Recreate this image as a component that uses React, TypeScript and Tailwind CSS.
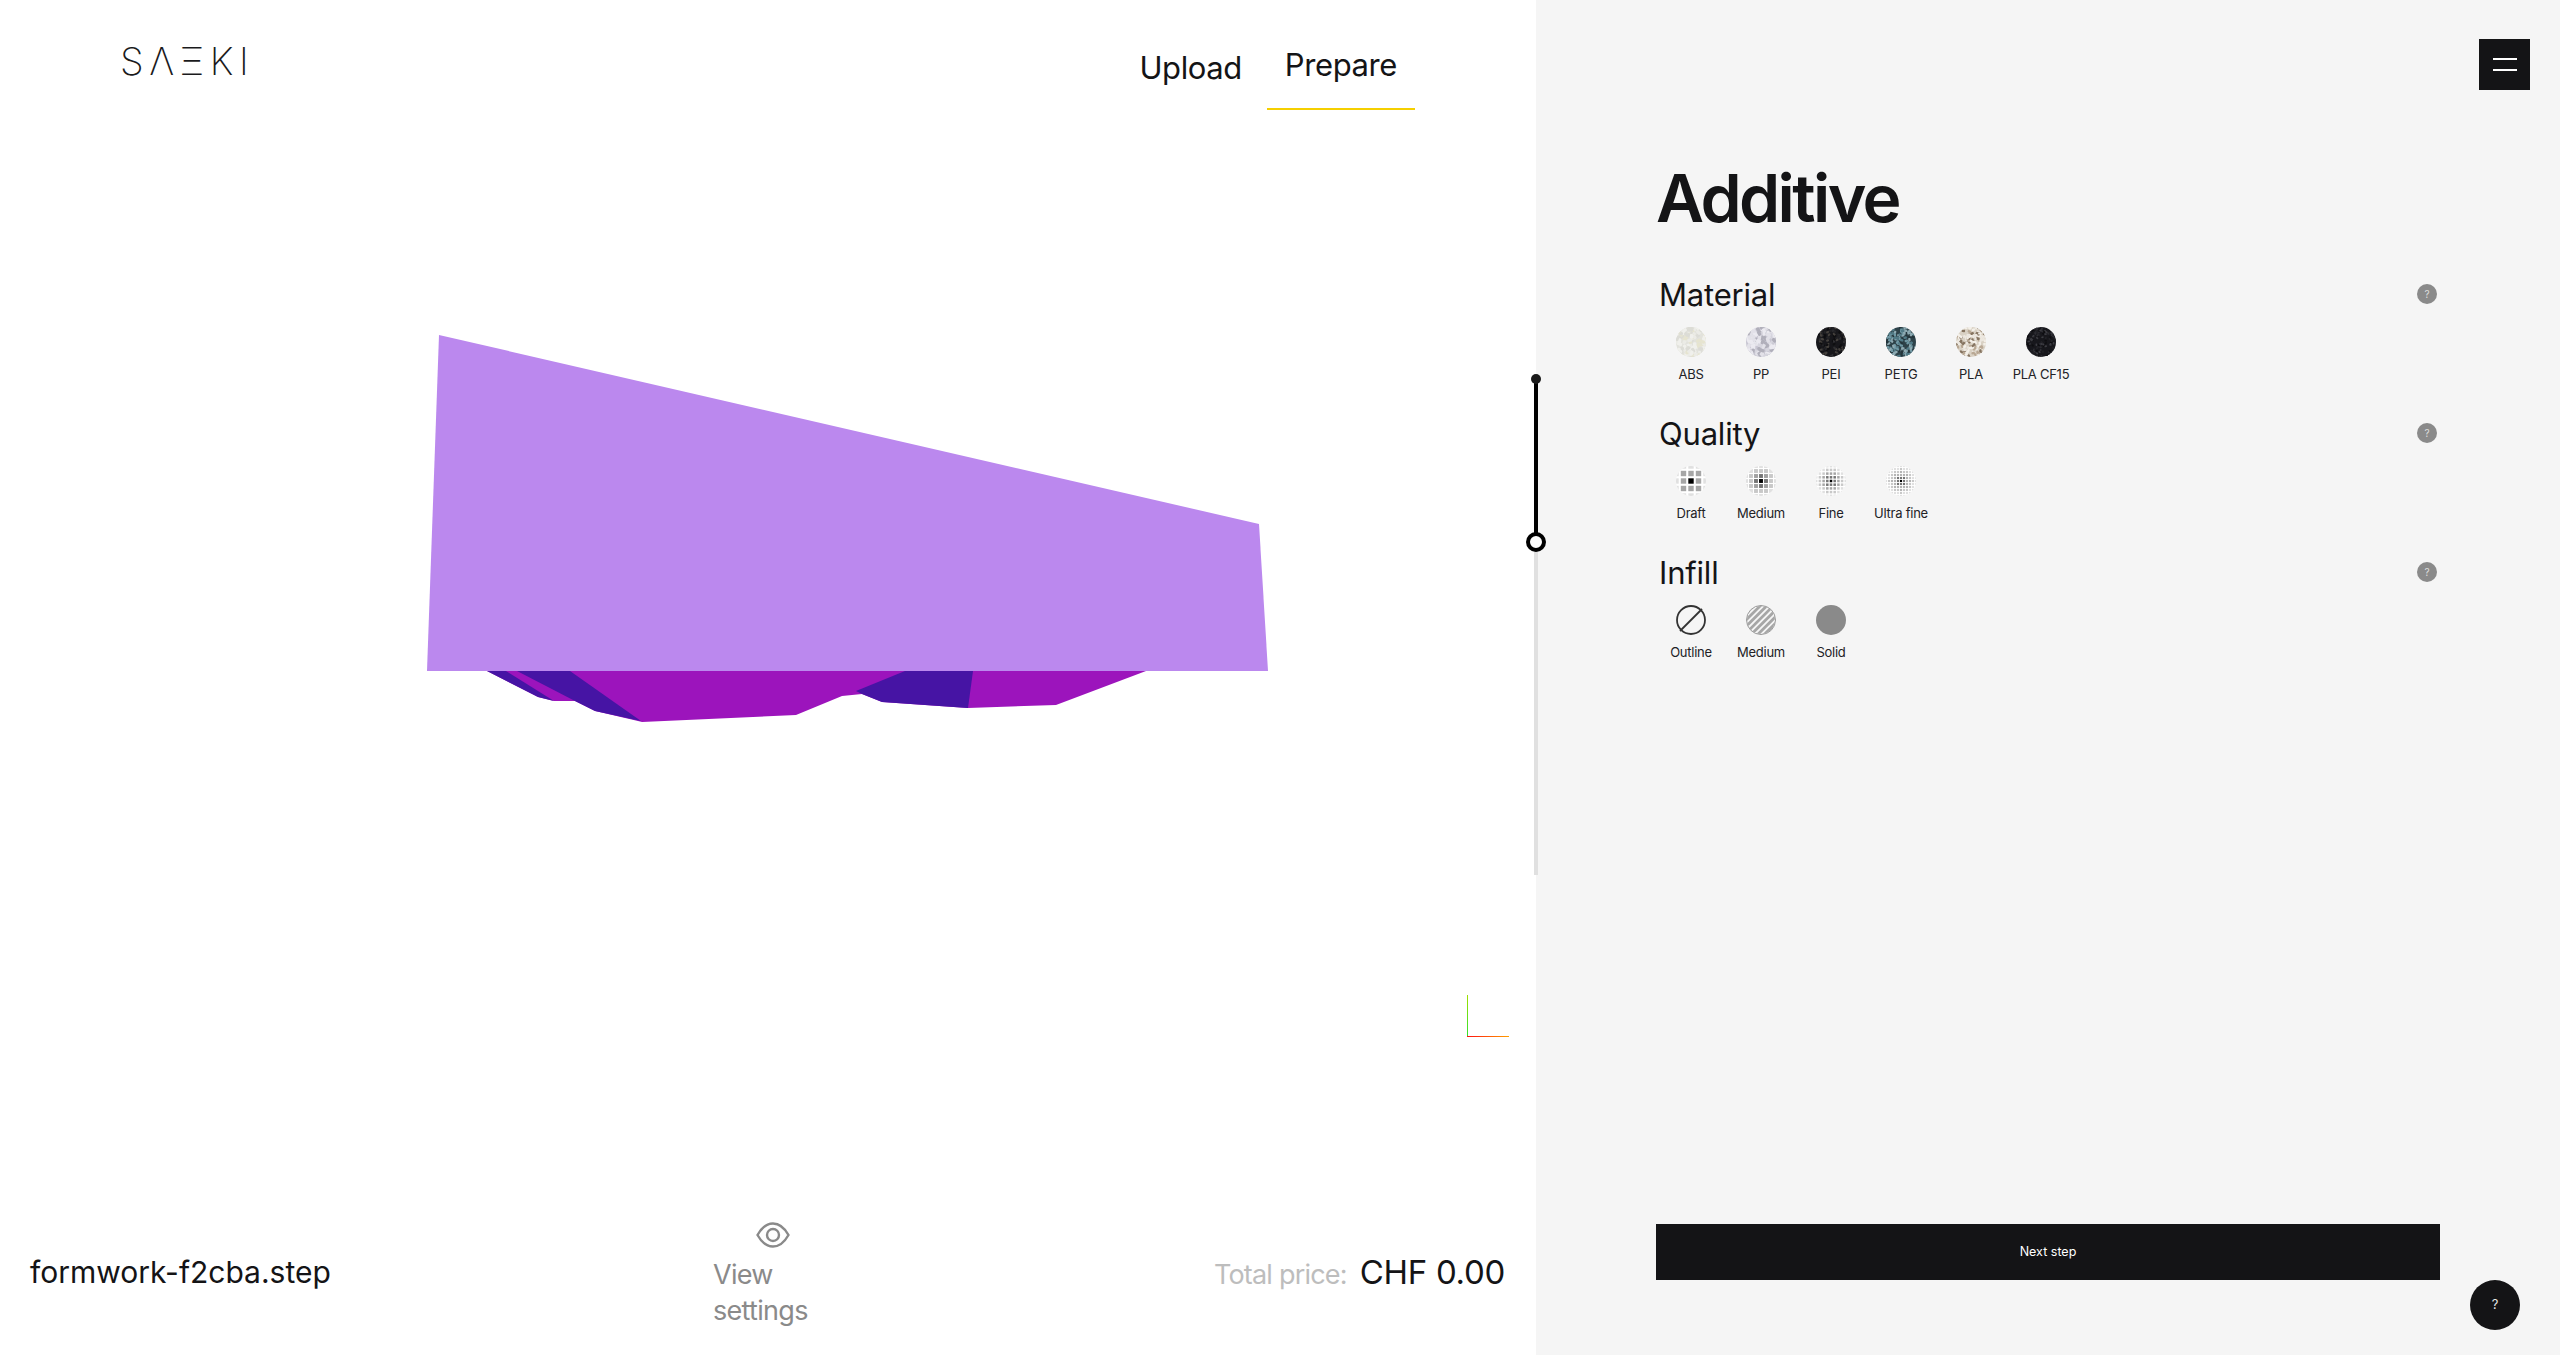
type Pellet = { base: string; colors: string[]; size: number; count: number };

const materials: { label: string; pellet: Pellet }[] = [
  { label: "ABS", pellet: { base: "#e2e2dc", colors: ["#f0f0ec", "#ebebe6", "#e6e4d0", "#dcdcd6"], size: 5, count: 110 } },
  { label: "PP", pellet: { base: "#c8c6d2", colors: ["#e2e1e8", "#ebeaf0", "#b0afba", "#d6d5de"], size: 5, count: 110 } },
  { label: "PEI", pellet: { base: "#17171b", colors: ["#2e2e31", "#45413d", "#222225", "#0e0e10"], size: 3, count: 110 } },
  { label: "PETG", pellet: { base: "#2e4249", colors: ["#6f98a4", "#517a86", "#8fabb3", "#24353b"], size: 3.5, count: 130 } },
  { label: "PLA", pellet: { base: "#d9d1c4", colors: ["#ece7df", "#85735f", "#b9a894", "#f4f0e9"], size: 3.5, count: 140 } },
  { label: "PLA CF15", pellet: { base: "#17171c", colors: ["#2d2d33", "#3c3c42", "#222227", "#0d0d10"], size: 2.5, count: 130 } },
];

const qualities = [
  { label: "Draft", cell: 7.5, dot: 5.4, tone: "#a6a6a6" },
  { label: "Medium", cell: 5, dot: 3.9, tone: "#a0a0a0" },
  { label: "Fine", cell: 3.7, dot: 2.5, tone: "#a4a4a4" },
  { label: "Ultra fine", cell: 3, dot: 2.1, tone: "#b4b4b4" },
];

function PelletSwatch({ pellet, seed }: { pellet: Pellet; seed: number }) {
  let s = seed * 7919 + 13;
  const rnd = () => {
    s = (s * 1103515245 + 12345) % 2147483648;
    return s / 2147483648;
  };
  const bits = Array.from({ length: pellet.count }, () => ({
    x: rnd() * 30,
    y: rnd() * 30,
    r: rnd() * 180,
    c: pellet.colors[Math.floor(rnd() * pellet.colors.length)],
  }));
  return (
    <svg width="30" height="30" viewBox="0 0 30 30" className="rounded-full">
      <rect width="30" height="30" fill={pellet.base} />
      {bits.map((b, i) => (
        <rect
          key={i}
          x={b.x - pellet.size / 2}
          y={b.y - pellet.size / 3}
          width={pellet.size}
          height={(pellet.size * 2) / 3}
          rx={pellet.size / 4}
          fill={b.c}
          transform={`rotate(${b.r} ${b.x} ${b.y})`}
        />
      ))}
    </svg>
  );
}

function QualitySwatch({ cell, dot, tone }: { cell: number; dot: number; tone: string }) {
  const n = Math.ceil(15 / cell);
  const cells = [];
  for (let row = -n; row <= n; row++) {
    for (let col = -n; col <= n; col++) {
      const dist = Math.hypot(row * cell, col * cell);
      const center = row === 0 && col === 0;
      const fade = dist > 12 ? "#e0e0e0" : dist > 9 && cell < 7 ? "#c8c8c8" : tone;
      const inner = cell < 7 && dist < 6 ? "#757575" : fade;
      cells.push(
        <rect
          key={`${row}-${col}`}
          x={15 + col * cell - dot / 2}
          y={15 + row * cell - dot / 2}
          width={dot}
          height={dot}
          fill={center ? "#000000" : inner}
        />
      );
    }
  }
  return (
    <svg width="30" height="30" viewBox="0 0 30 30" className="rounded-full bg-white">
      {cells}
    </svg>
  );
}

function OutlineIcon() {
  return (
    <svg width="30" height="30" viewBox="0 0 30 30">
      <circle cx="15" cy="15" r="14" fill="none" stroke="#333333" strokeWidth="1.8" />
      <line x1="4" y1="26" x2="26" y2="4" stroke="#333333" strokeWidth="1.8" />
    </svg>
  );
}

function StripesIcon() {
  const lines = [-21, -14, -7, 0, 7, 14, 21];
  return (
    <svg width="30" height="30" viewBox="0 0 30 30" className="rounded-full border border-[#999999] bg-[#f5f5f5]">
      {lines.map((o) => (
        <line key={o} x1={o - 6} y1="34" x2={o + 34} y2="-6" stroke="#a6a6a6" strokeWidth="3" />
      ))}
    </svg>
  );
}

function Option({ label, children }: { label: string; children: React.ReactNode }) {
  return (
    <div className="flex w-[70px] flex-col items-center">
      {children}
      <span className="mt-[9px] whitespace-nowrap text-[13px] leading-[16px] tracking-[-0.25px] text-[#222226]">{label}</span>
    </div>
  );
}

function Section({ title, children }: { title: string; children: React.ReactNode }) {
  return (
    <section className="h-[139px]">
      <div className="flex h-[32px] items-center justify-between pl-[3px] pr-[3px]">
        <h2 className="pt-[1px] text-[31px] font-normal leading-[32px] tracking-[-0.2px] text-[#141416]">{title}</h2>
        <span className="flex h-[20px] w-[20px] items-center justify-center rounded-full bg-[#8a8a8a] text-[10px] text-[#dddddd]">?</span>
      </div>
      <div className="mt-[17px] flex">{children}</div>
    </section>
  );
}

export default function App() {
  return (
    <div className="relative flex h-[1355px] w-[2560px] overflow-hidden bg-white font-['Inter',sans-serif] text-[#141416]">
      <div className="flex w-[1536px] flex-col">
        <header className="flex h-[110px] items-start justify-between">
          <div className="ml-[120px] mt-[38px] text-[38px] font-extralight leading-[46px] tracking-[5.5px] text-[#1a1a1c]">SΛΞKI</div>
          <nav className="mr-[121px] flex text-[31px] tracking-[-0.4px]">
            <span className="flex h-[110px] items-center pl-[18px] pr-[25px] pt-[26px]">Upload</span>
            <span className="flex h-[110px] items-center border-b-[2px] border-[#f5cf00] px-[18px] pt-[22px]">Prepare</span>
          </nav>
        </header>

        <svg width="1536" height="1080" viewBox="0 110 1536 1080" className="block">
          <defs>
            <linearGradient id="axisY" x1="0" y1="0" x2="0" y2="1">
              <stop offset="0" stopColor="#a0e000" />
              <stop offset="1" stopColor="#30e030" />
            </linearGradient>
            <linearGradient id="axisX" x1="0" y1="0" x2="1" y2="0">
              <stop offset="0" stopColor="#ff1010" />
              <stop offset="1" stopColor="#ffa000" />
            </linearGradient>
          </defs>
          <polygon
            fill="#9c14bc"
            points="487,671 538,697 554,701 575,701 595,711 638,721 642,722 796,715 842,696 862,694 882,702 968,708 1056,705 1146,671"
          />
          <polygon fill="#4614a4" points="487,671 506,671 554,701 538,697" />
          <polygon fill="#4614a4" points="517,671 570,671 641,721 595,711 575,701" />
          <polygon fill="#4614a4" points="905,671 973,671 968,708 882,702 862,694 856,691" />
          <polygon fill="#bb88ee" points="439,335 1259,524 1268,671 427,671" />
          <rect x="1467" y="995" width="1" height="42" fill="url(#axisY)" />
          <rect x="1467" y="1036" width="42" height="1" fill="url(#axisX)" />
        </svg>

        <footer className="flex flex-1 items-start pl-[30px] pr-[31px]">
          <div className="mt-[61px] w-[682px] text-[30px] leading-[42px]">formwork-f2cba.step</div>
          <div className="mt-[32px] flex w-[122px] flex-col items-center text-[27px] leading-[36px] tracking-[-0.7px] text-[#8a8a8a]">
            <svg width="34" height="26" viewBox="0 0 34 26" fill="none" stroke="#8a8a8a" strokeWidth="2.4">
              <path d="M1.5 13C6 5 11 1.5 17 1.5S28 5 32.5 13C28 21 23 24.5 17 24.5S6 21 1.5 13Z" />
              <circle cx="17" cy="13" r="6" />
            </svg>
            <span className="ml-[1px] mt-[9px] self-start">View settings</span>
          </div>
          <div className="ml-auto mt-[62px] flex items-baseline">
            <span className="text-[27px] leading-[40px] tracking-[-0.8px] text-[#bdbdbd]">Total price:</span>
            <span className="ml-[13px] text-[33px] leading-[40px] tracking-[-0.3px]">CHF 0.00</span>
          </div>
        </footer>
      </div>

      <aside className="flex w-[1024px] flex-col bg-[#f5f5f5] pb-[75px] pl-[120px] pr-[120px] pt-[160px]">
        <h1 className="text-[66px] font-semibold leading-[76px] tracking-[-2.6px] text-[#141416]">Additive</h1>
        <div className="mt-[42px]">
          <Section title="Material">
            {materials.map((m, i) => (
              <Option key={m.label} label={m.label}>
                <PelletSwatch pellet={m.pellet} seed={i + 1} />
              </Option>
            ))}
          </Section>
          <Section title="Quality">
            {qualities.map((q) => (
              <Option key={q.label} label={q.label}>
                <QualitySwatch cell={q.cell} dot={q.dot} tone={q.tone} />
              </Option>
            ))}
          </Section>
          <Section title="Infill">
            <Option label="Outline">
              <OutlineIcon />
            </Option>
            <Option label="Medium">
              <StripesIcon />
            </Option>
            <Option label="Solid">
              <div className="h-[30px] w-[30px] rounded-full bg-[#8a8a8a]" />
            </Option>
          </Section>
        </div>
        <button className="mt-auto h-[56px] w-full bg-[#141416] pt-[1px] text-[12.5px] text-white">Next step</button>
      </aside>

      {/* slider sits across the panel edge */}
      <div className="absolute left-[1534px] top-[378px] flex h-[497px] w-[4px] flex-col items-center">
        <div className="absolute -top-[4px] h-[10px] w-[10px] rounded-full bg-[#1a1a1a]" />
        <div className="h-[164px] w-full shrink-0 bg-black" />
        <div className="w-full flex-1 bg-[#e0e0e0]" />
        <div className="absolute top-[154px] h-[20px] w-[20px] rounded-full border-[4px] border-black bg-white" />
      </div>

      <button className="absolute left-[2479px] top-[39px] flex h-[51px] w-[51px] flex-col items-center justify-center gap-[9px] bg-[#141416]">
        <span className="h-[2px] w-[24px] bg-white" />
        <span className="h-[2px] w-[24px] bg-white" />
      </button>
      <button className="absolute left-[2470px] top-[1280px] flex h-[50px] w-[50px] items-center justify-center rounded-full bg-[#141416] text-[13px] text-[#e5e5e5]">?</button>
    </div>
  );
}
